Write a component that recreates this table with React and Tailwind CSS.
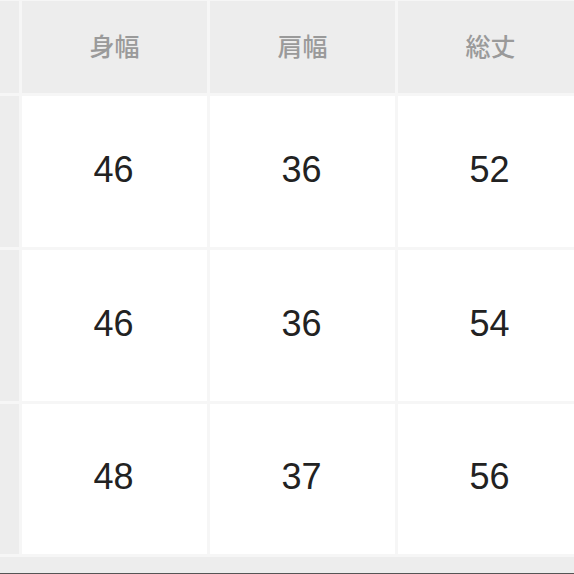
// App.jsx: size chart table (身幅 / 肩幅 / 総丈) cropped screenshot
import { Fragment } from "react";

const headers = ["身幅", "肩幅", "総丈"];
const rows = [
  ["46", "36", "52"],
  ["46", "36", "54"],
  ["48", "37", "56"],
];

export default function App() {
  return (
    <div className="w-[574px] h-[574px] overflow-hidden bg-[#ededed] flex flex-col">
      <div className="grid grid-cols-[19px_185px_185px_185px] grid-rows-[92px_151px_151px_150px] gap-[3px] bg-[#f6f6f6] w-[583px] pt-[1px] pb-[3px]">
        {/* header row */}
        <div className="bg-[#ededed]" />
        {headers.map((h) => (
          <div
            key={h}
            className="bg-[#ededed] flex items-center justify-center pb-[2px] text-[25px] font-medium text-[#9a9a9a] font-['Noto_Sans_CJK_JP','Noto_Sans',sans-serif]"
          >
            {h}
          </div>
        ))}

        {/* body rows */}
        {rows.map((r, i) => (
          <Fragment key={i}>
            <div className="bg-[#ededed]" />
            {r.map((v, j) => (
              <div
                key={j}
                className="bg-white flex items-center justify-center pb-[4px] pr-[2px] text-[36px] text-[#222] font-['Liberation_Sans',Arial,sans-serif]"
              >
                {v}
              </div>
            ))}
          </Fragment>
        ))}
      </div>
      <div className="flex-1 bg-[#ededed]" />
      <div className="h-[1px] bg-[#555]" />
    </div>
  );
}
